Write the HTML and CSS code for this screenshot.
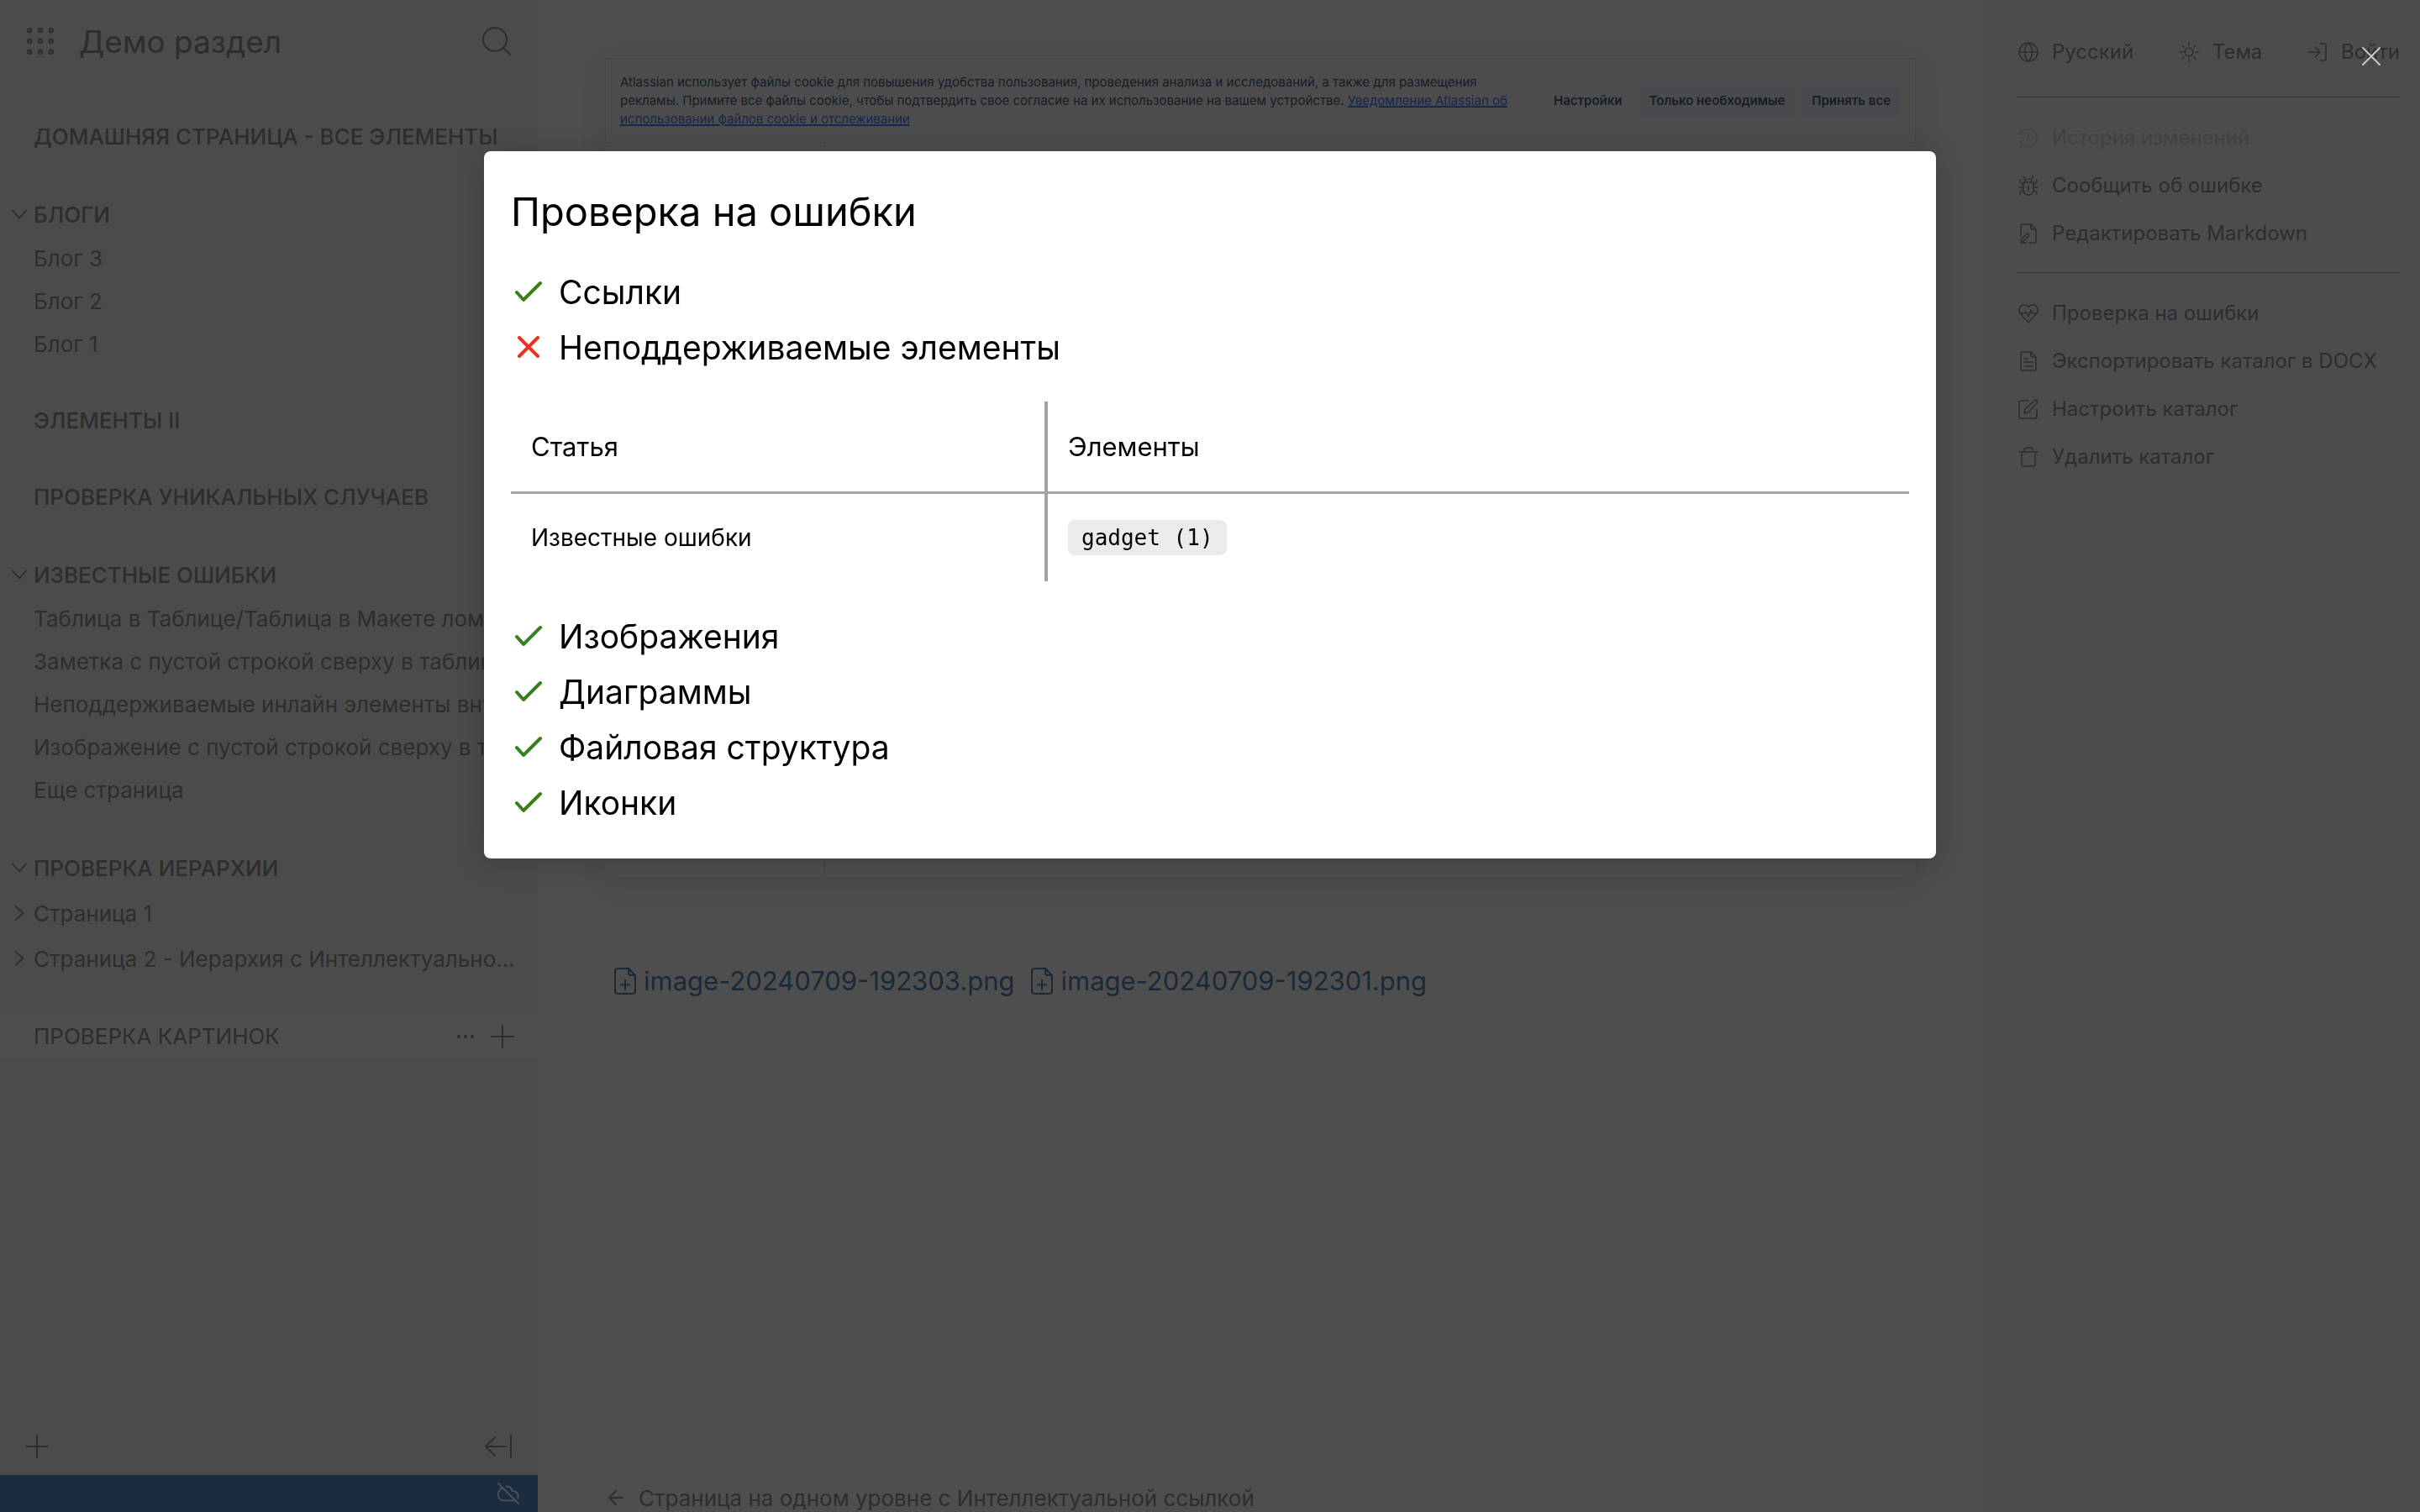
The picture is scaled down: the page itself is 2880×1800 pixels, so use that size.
FILE: index.html
```html
<!DOCTYPE html>
<html lang="ru">
<head>
<meta charset="utf-8">
<title>Демо раздел</title>
<meta name="viewport" content="width=device-width, initial-scale=1">
<link rel="stylesheet" href="styles.css">
</head>
<body>
<svg class="sprite" aria-hidden="true">
  <symbol id="check" viewBox="0 0 32 24"><path d="M2 13l8 9L30 2"/></symbol>
  <symbol id="cross" viewBox="0 0 26 26"><path d="M2 2l22 22M24 2L2 24"/></symbol>
  <symbol id="down" viewBox="0 0 20 20"><path d="M1 5l9 10 9-10"/></symbol>
  <symbol id="right" viewBox="0 0 20 20"><path d="M5 1l10 9-10 9"/></symbol>
  <symbol id="plus" viewBox="0 0 28 28"><path d="M14 1v26M1 14h26"/></symbol>
  <symbol id="file-plus" viewBox="0 0 26 32"><path d="M17 1H4a3 3 0 0 0-3 3v24a3 3 0 0 0 3 3h18a3 3 0 0 0 3-3V9zM17 1v5a3 3 0 0 0 3 3h5M13 15v11M8 20.500h10"/></symbol>
</svg>

<div class="page">
  <aside class="sidebar">
    <header class="sidebar-head">
      <button class="icon-button" aria-label="Разделы">
        <svg class="dots" viewBox="0 0 30 30"><g><circle cx="3" cy="3" r="2"/><circle cx="15" cy="3" r="2"/><circle cx="27" cy="3" r="2"/><circle cx="3" cy="15" r="2"/><circle cx="15" cy="15" r="2"/><circle cx="27" cy="15" r="2"/><circle cx="3" cy="27" r="2"/><circle cx="15" cy="27" r="2"/><circle cx="27" cy="27" r="2"/></g></svg>
      </button>
      <a class="brand" href="#">Демо раздел</a>
      <button class="icon-button" aria-label="Поиск">
        <svg class="tool" viewBox="0 0 34 34"><circle cx="15" cy="15" r="14"/><path d="M25 25l8 8"/></svg>
      </button>
    </header>
    <nav class="tree">
      <section class="group"><a class="row top" href="#">Домашняя страница - все элементы</a></section>
      <section class="group">
        <a class="row top open" href="#"><svg class="chevron"><use href="#down"/></svg>Блоги</a>
        <a class="row" href="#">Блог 3</a>
        <a class="row" href="#">Блог 2</a>
        <a class="row" href="#">Блог 1</a>
      </section>
      <section class="group"><a class="row top" href="#">Элементы II</a></section>
      <section class="group"><a class="row top" href="#">Проверка уникальных случаев</a></section>
      <section class="group">
        <a class="row top open" href="#"><svg class="chevron"><use href="#down"/></svg>Известные ошибки</a>
        <a class="row" href="#"><span>Таблица в Таблице/Таблица в Макете ломается</span></a>
        <a class="row" href="#"><span>Заметка с пустой строкой сверху в таблице</span></a>
        <a class="row" href="#"><span>Неподдерживаемые инлайн элементы внутри</span></a>
        <a class="row" href="#"><span>Изображение с пустой строкой сверху в таблице</span></a>
        <a class="row" href="#">Еще страница</a>
      </section>
      <section class="group">
        <a class="row top open" href="#"><svg class="chevron"><use href="#down"/></svg>Проверка иерархии</a>
        <a class="row open" href="#"><svg class="chevron"><use href="#right"/></svg>Страница 1</a>
        <a class="row open" href="#"><svg class="chevron"><use href="#right"/></svg><span>Страница 2 - Иерархия с Интеллектуальной ссылкой</span></a>
      </section>
      <section class="group current">
        <a class="row top" href="#">Проверка картинок</a>
        <button class="icon-button" aria-label="Действия"><svg class="more" viewBox="0 0 24 24"><circle cx="4" cy="12" r="2"/><circle cx="12" cy="12" r="2"/><circle cx="20" cy="12" r="2"/></svg></button>
        <button class="icon-button" aria-label="Добавить статью"><svg class="add"><use href="#plus"/></svg></button>
      </section>
    </nav>
    <footer class="sidebar-foot">
      <button class="icon-button" aria-label="Добавить"><svg class="add"><use href="#plus"/></svg></button>
      <button class="icon-button" aria-label="Свернуть">
        <svg class="tool" viewBox="0 0 34 34"><path d="M26 17H2M13 6L2 17l11 11M32 4v26"/></svg>
      </button>
    </footer>
    <div class="status">
      <svg class="cloud" viewBox="0 0 28 28"><path d="M1 1l26 26M6 6.500C2 9 1 12 1 15c0 5 3 8 7 8h15M11 5c4-1 7 2 8 6 5-1 9 4 7 9"/></svg>
    </div>
  </aside>

  <main class="content">
    <figure class="shot">
      <div class="cookie">
        <p>Atlassian использует файлы cookie для повышения удобства пользования, проведения анализа и исследований, а также для размещения<br>рекламы. Примите все файлы cookie, чтобы подтвердить свое согласие на их использование на вашем устройстве. <a href="#">Уведомление Atlassian об<br>использовании файлов cookie и отслеживании</a></p>
        <div class="cookie-actions">
          <button class="cookie-button plain">Настройки</button>
          <button class="cookie-button">Только необходимые</button>
          <button class="cookie-button">Принять все</button>
        </div>
      </div>
      <div class="shot-body"></div>
    </figure>
    <div class="files">
      <a href="#"><svg class="file"><use href="#file-plus"/></svg>image-20240709-192303.png</a>
      <a href="#"><svg class="file"><use href="#file-plus"/></svg>image-20240709-192301.png</a>
    </div>
    <a class="previous" href="#"><svg class="back" viewBox="0 0 18 18"><path d="M17 9H1M9 1L1 9l8 8"/></svg>Страница на одном уровне с Интеллектуальной ссылкой</a>
  </main>

  <aside class="actions">
    <div class="action-top">
      <button class="action"><svg viewBox="0 0 24 24"><circle cx="12" cy="12" r="11"/><path d="M1 12h22M12 1c-6 6-6 16 0 22M12 1c6 6 6 16 0 22"/></svg>Русский</button>
      <button class="action"><svg viewBox="0 0 24 24"><circle cx="12" cy="12" r="5"/><path d="M12 1v3M12 20v3M1 12h3M20 12h3M4 4l2 2M18 18l2 2M4 20l2-2M18 6l2-2"/></svg>Тема</button>
      <button class="action"><svg viewBox="0 0 24 24"><path d="M1 12h14M9 6l6 6-6 6M15 2h5a2 2 0 0 1 2 2v16a2 2 0 0 1-2 2h-5"/></svg>Войти</button>
    </div>
    <div class="action-list">
      <button class="action" disabled><svg viewBox="0 0 24 24"><path d="M2 2v6h6M2 8a10.500 10.500 0 1 1 0 8M12 7v6l4 3"/></svg>История изменений</button>
      <button class="action"><svg viewBox="0 0 24 24"><path d="M6 8h12v9a6 6 0 0 1-12 0zM8 8a4 4 0 0 1 8 0M12 12v7M8 4L6 1M16 4l2-3M1 14h5M18 14h5M6 10C3 10 2 8 2 5M18 10c3 0 4-2 4-5M6 18c-3 0-4 2-4 5M18 18c3 0 4 2 4 5"/></svg>Сообщить об ошибке</button>
      <button class="action"><svg viewBox="0 0 24 24"><path d="M3 14V3a2 2 0 0 1 2-2h10l6 6v14a2 2 0 0 1-2 2h-6M15 1v4a2 2 0 0 0 2 2h4M3 23l1-5 7-6 2 2-7 7zM3 23h6"/></svg>Редактировать Markdown</button>
    </div>
    <div class="action-list">
      <button class="action"><svg viewBox="0 0 24 24"><path d="M12 23L2 12C-1 6 3 1 8 2c2 0 3 1 4 3 1-2 2-3 4-3 5-1 9 4 6 10zM2 12h6l1-2 3 6 3-8 1 4h6"/></svg>Проверка на ошибки</button>
      <button class="action"><svg viewBox="0 0 24 24"><path d="M15 1H5a2 2 0 0 0-2 2v18a2 2 0 0 0 2 2h14a2 2 0 0 0 2-2V7zM15 1v4a2 2 0 0 0 2 2h4M7 9h4M7 13h10M7 18h10"/></svg>Экспортировать каталог в DOCX</button>
      <button class="action"><svg viewBox="0 0 24 24"><path d="M12 2H3a2 2 0 0 0-2 2v17a2 2 0 0 0 2 2h17a2 2 0 0 0 2-2v-9M7 17l1-5L19 2c2-2 5 1 3 3L12 16z"/></svg>Настроить каталог</button>
      <button class="action"><svg viewBox="0 0 24 24"><path d="M1 6h22M4 6v15a2 2 0 0 0 2 2h12a2 2 0 0 0 2-2V6M7 6V3a2 2 0 0 1 2-2h6a2 2 0 0 1 2 2v3"/></svg>Удалить каталог</button>
    </div>
  </aside>
</div>

<div class="overlay">
  <button class="close" aria-label="Закрыть"><svg viewBox="0 0 22 22"><path d="M1 1l20 20M21 1L1 21"/></svg></button>
  <div class="modal" role="dialog" aria-labelledby="modal-title">
    <h1 id="modal-title">Проверка на ошибки</h1>
    <h2><svg class="ok"><use href="#check"/></svg>Ссылки</h2>
    <h2><svg class="bad"><use href="#cross"/></svg>Неподдерживаемые элементы</h2>
    <table>
      <thead><tr><th>Статья</th><th>Элементы</th></tr></thead>
      <tbody><tr><td>Известные ошибки</td><td><code>gadget (1)</code></td></tr></tbody>
    </table>
    <h2><svg class="ok"><use href="#check"/></svg>Изображения</h2>
    <h2><svg class="ok"><use href="#check"/></svg>Диаграммы</h2>
    <h2><svg class="ok"><use href="#check"/></svg>Файловая структура</h2>
    <h2><svg class="ok"><use href="#check"/></svg>Иконки</h2>
  </div>
</div>
</body>
</html>
```
FILE: styles.css
```css
:root {
  --page: #4e4e4e;
  --side: #4b4b4b;
  --ink: #2d2d2d;
  --link: #1a2938;
}

* { box-sizing: border-box; }

body {
  margin: 0;
  background: var(--page);
  color: var(--ink);
  font-family: Inter, "Liberation Sans", sans-serif;
  font-size: 26px;
}

a { color: inherit; text-decoration: none; }

button {
  padding: 0;
  border: 0;
  background: none;
  color: inherit;
  font: inherit;
}

svg {
  flex: none;
  overflow: visible;
  fill: none;
  stroke: currentColor;
  stroke-width: 2;
  stroke-linecap: round;
  stroke-linejoin: round;
}

.sprite { position: absolute; width: 0; height: 0; }

.page { display: flex; height: 100vh; overflow: hidden; }

/* Left navigation */
.sidebar {
  display: flex;
  flex: none;
  flex-direction: column;
  width: 640px;
  background: var(--side);
}

.sidebar-head {
  display: flex;
  align-items: center;
  height: 98px;
  padding: 0 32px;
}

.icon-button { display: flex; align-items: center; justify-content: center; }
.dots { width: 32px; height: 32px; }
.brand { flex: 1; margin-left: 30px; font-size: 37px; }
.tool { width: 34px; height: 34px; }

.tree {
  display: flex;
  flex: 1;
  flex-direction: column;
  gap: 40px;
  padding-top: 39px;
}

.row {
  display: flex;
  align-items: center;
  height: 51px;
  padding: 0 24px 0 40px;
  white-space: nowrap;
}

.row span { overflow: hidden; text-overflow: ellipsis; }
.top { font-weight: 500; text-transform: uppercase; }
.open { height: 54px; padding-left: 14px; }
.chevron { width: 18px; height: 18px; margin-right: 8px; }

.current { display: flex; align-items: center; padding-right: 28px; background: var(--page); }
.current .top { flex: 1; font-weight: 400; }
.more { width: 24px; height: 24px; margin-right: 18px; fill: currentColor; stroke: none; }
.add { width: 28px; height: 28px; }

.sidebar-foot {
  display: flex;
  align-items: center;
  justify-content: space-between;
  height: 68px;
  padding: 0 30px;
}

.status {
  display: flex;
  align-items: center;
  justify-content: flex-end;
  height: 44px;
  padding-right: 22px;
  background: #1c2c40;
  color: #4d5358;
}

.cloud { width: 26px; height: 26px; }

/* Article */
.content {
  display: flex;
  flex: 1;
  flex-direction: column;
  min-width: 0;
  padding: 69px 80px 0;
}

.shot {
  display: flex;
  flex-direction: column;
  height: 975px;
  margin: 0;
  box-shadow: 0 8px 32px rgba(0, 0, 0, 0.08);
}

.cookie {
  display: flex;
  align-items: center;
  justify-content: space-between;
  height: 102px;
  padding: 0 17px;
  border: 1px solid #454545;
  background: #4c4c4c;
  color: #161c28;
  font-size: 15px;
  line-height: 22px;
  white-space: nowrap;
}

.cookie p { margin: 0; }
.cookie a { color: #172550; text-decoration: underline; text-decoration-thickness: 2px; }
.cookie-actions { display: flex; gap: 8px; }
.cookie-button { height: 35px; padding: 0 12px; border-radius: 4px; background: #484a4d; font-weight: 600; }
.plain { background: none; }

.shot-body { flex: 1; width: 262px; border-right: 1px solid #474747; }

.files {
  display: flex;
  gap: 20px;
  margin-top: 104px;
  padding-left: 11px;
  color: var(--link);
  font-size: 31px;
  line-height: 40px;
}

.files a { display: flex; align-items: center; gap: 9px; }
.file { width: 26px; height: 32px; }

.previous { display: flex; align-items: center; gap: 18px; height: 34px; margin-top: auto; padding-left: 4px; }
.back { width: 18px; height: 18px; }

/* Right actions */
.actions {
  flex: none;
  width: 520px;
  padding: 33px 24px 0 40px;
  background: #4c4c4c;
  font-size: 24px;
}

.action-top { display: flex; justify-content: space-between; padding-bottom: 25px; border-bottom: 1px solid #343434; }
.action { display: flex; align-items: center; gap: 16px; height: 57px; white-space: nowrap; }
.action svg { width: 24px; height: 24px; margin-left: 2px; stroke-width: 1.5; }
.action:disabled { color: #414141; }
.action-list { padding: 19px 0 18px; }
.action-list + .action-list { border-top: 1px solid #343434; }

/* Check results window */
.overlay { position: fixed; inset: 0; padding-top: 10vh; }

.close { position: absolute; top: 56px; right: 47px; display: flex; color: #c8c8c8; }
.close svg { width: 22px; height: 22px; }

.modal {
  width: 60%;
  margin: 0 auto;
  padding: 42px 32px 34px;
  border-radius: 8px;
  background: #fff;
  box-shadow: 0 4px 32px rgba(0, 0, 0, 0.2);
  color: #000;
}

.modal h1 { margin: 0 0 32px; font-size: 47px; font-weight: 400; line-height: 60px; }

.modal h2 {
  display: flex;
  align-items: center;
  gap: 20px;
  height: 66px;
  margin: 0;
  padding-left: 5px;
  font-size: 39px;
  font-weight: 400;
}

.modal h2 svg { width: 32px; height: 26px; stroke-width: 4; }
.ok { color: #37801f; }
.bad { color: #ea3323; }

table { width: 100%; margin: 32px 0; border-collapse: collapse; table-layout: fixed; }
th, td { padding: 0 24px; text-align: left; font-weight: 400; }
th { height: 108px; border-bottom: 3px solid #a3a3a3; font-size: 31px; }
td { height: 106px; font-size: 28px; }
th:first-child, td:first-child { width: 637px; border-right: 4px solid #a3a3a3; }

code {
  display: inline-block;
  padding: 0 16px;
  border-radius: 8px;
  background: #ebebeb;
  font: 26px/42px "DejaVu Sans Mono", monospace;
}
```
